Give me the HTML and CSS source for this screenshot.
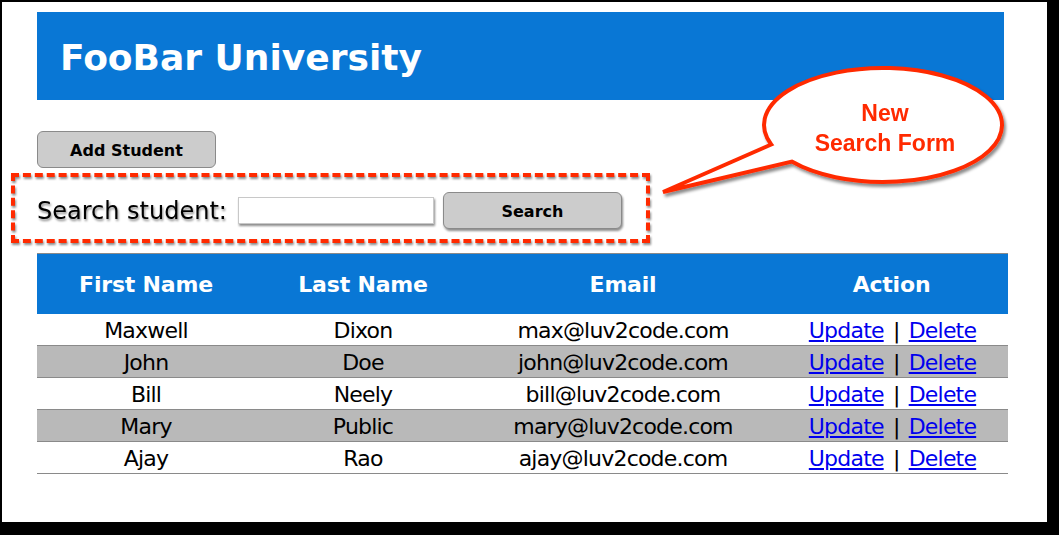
FILE: index.html
```html
<!DOCTYPE html>
<html lang="en">
<head>
<meta charset="utf-8">
<title>FooBar University</title>
<link rel="stylesheet" href="styles.css">
</head>
<body>
<div class="window">
  <header class="banner">
    <h1 class="banner-title">FooBar University</h1>
  </header>

  <button class="btn btn-add" type="button">Add Student</button>

  <form class="search-form">
    <label class="search-label" for="q">Search student:</label>
    <input class="search-input" id="q" type="text">
    <button class="btn btn-search" type="button">Search</button>
  </form>

  <table class="students">
    <thead>
      <tr>
        <th class="c1">First Name</th>
        <th class="c2">Last Name</th>
        <th class="c3">Email</th>
        <th class="c4">Action</th>
      </tr>
    </thead>
    <tbody>
      <tr><td>Maxwell</td><td>Dixon</td><td>max@luv2code.com</td><td class="actions"><a href="#">Update</a> | <a href="#">Delete</a></td></tr>
      <tr class="alt"><td>John</td><td>Doe</td><td>john@luv2code.com</td><td class="actions"><a href="#">Update</a> | <a href="#">Delete</a></td></tr>
      <tr><td>Bill</td><td>Neely</td><td>bill@luv2code.com</td><td class="actions"><a href="#">Update</a> | <a href="#">Delete</a></td></tr>
      <tr class="alt"><td>Mary</td><td>Public</td><td>mary@luv2code.com</td><td class="actions"><a href="#">Update</a> | <a href="#">Delete</a></td></tr>
      <tr><td>Ajay</td><td>Rao</td><td>ajay@luv2code.com</td><td class="actions"><a href="#">Update</a> | <a href="#">Delete</a></td></tr>
    </tbody>
  </table>

  <div class="callout">
    <svg class="callout-shape" width="372" height="144" viewBox="650 60 372 144" aria-hidden="true">
      <defs>
        <filter id="sh" x="-10%" y="-10%" width="130%" height="140%">
          <feDropShadow dx="2" dy="3" stdDeviation="1.6" flood-color="#000" flood-opacity="0.45"/>
        </filter>
      </defs>
      <path d="M 771.2 144.5 A 119 57 0 1 1 791.8 161.6 L 663 192 Z"
            fill="#fff" stroke="#ff2a00" stroke-width="4" stroke-linejoin="miter" filter="url(#sh)"/>
    </svg>
    <div class="callout-text">New<br>Search Form</div>
  </div>
</div>
</body>
</html>
```

FILE: styles.css
```css
html, body {
  margin: 0;
  padding: 0;
}

body {
  background: #000;
  font-family: "DejaVu Sans", Verdana, sans-serif;
  color: #000;
}

.window {
  position: relative;
  box-sizing: border-box;
  width: 1045px;
  height: 520px;
  margin: 2px 0 0 2px;
  padding: 10px 0 0 35px;
  background: #fff;
  display: flex;
  flex-direction: column;
  align-items: flex-start;
}

.banner {
  box-sizing: border-box;
  width: 967px;
  height: 88px;
  background: #0977d5;
  display: flex;
  align-items: center;
  padding: 3px 0 0 23px;
}

.banner-title {
  margin: 0;
  font-size: 36px;
  font-weight: bold;
  color: #fff;
  line-height: 1;
}

.btn {
  box-sizing: border-box;
  width: 179px;
  height: 37px;
  background: #cccccc;
  border: 1px solid #8a8a8a;
  border-radius: 6px;
  font-family: "DejaVu Sans", Verdana, sans-serif;
  font-weight: bold;
  font-size: 16px;
  color: #000;
  padding: 1px 0 0;
}

.btn-add {
  margin-top: 31px;
}

.search-form {
  margin: 5px 0 0 -26px;
  border: 4px dashed #ff2a00;
  padding: 15px 24px 10px 22px;
  display: flex;
  align-items: center;
  filter: drop-shadow(1px 2px 1px rgba(0, 0, 0, 0.45));
}

.search-label {
  font-size: 24px;
  line-height: 1;
  margin-right: 11px;
}

.search-input {
  box-sizing: border-box;
  width: 196px;
  height: 27px;
  border: 1px solid #c8c8c8;
  margin: 0 9px 0 0;
  padding: 0;
  background: #fff;
}

.students {
  margin-top: 10px;
  width: 971px;
  border-collapse: collapse;
  border-top: 1px solid #8a8a8a;
}

.students th {
  box-sizing: border-box;
  background: #0977d5;
  color: #fff;
  font-size: 22px;
  font-weight: bold;
  height: 60px;
  padding: 2px 0 0;
  letter-spacing: -0.2px;
}

.c1 { width: 218px; }
.c2 { width: 216px; }
.c3 { width: 304px; }
.c4 { width: 233px; }

.students td {
  height: 27px;
  padding: 4px 0 0;
  text-align: center;
  font-size: 22px;
  letter-spacing: -0.8px;
  line-height: 1;
  border-bottom: 1px solid #8a8a8a;
}

.students td.actions {
  word-spacing: 3px;
  padding-left: 2px;
}

.students tr.alt td {
  background: #b9b9b9;
}

.students a {
  color: #0000ee;
  text-decoration: underline;
}

.callout {
  position: absolute;
  left: 648px;
  top: 58px;
  width: 372px;
  height: 144px;
}

.callout-shape {
  display: block;
}

.callout-text {
  position: absolute;
  left: 135px;
  top: 38px;
  width: 200px;
  text-align: center;
  font-family: "Liberation Sans", Arial, sans-serif;
  font-weight: bold;
  font-size: 23px;
  line-height: 30px;
  color: #ff2a00;
}
```
